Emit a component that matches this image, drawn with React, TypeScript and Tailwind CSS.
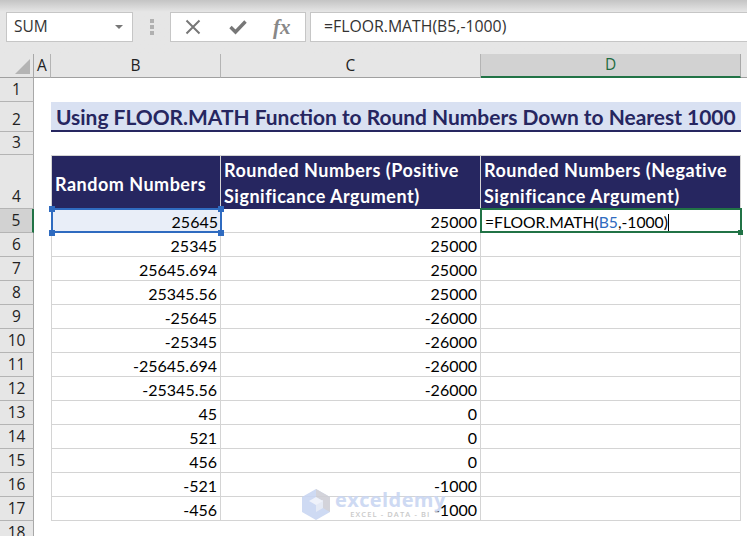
import React from 'react';

const rows: [number, string, string][] = [
  [6, '25345', '25000'],
  [7, '25645.694', '25000'],
  [8, '25345.56', '25000'],
  [9, '-25645', '-26000'],
  [10, '-25345', '-26000'],
  [11, '-25645.694', '-26000'],
  [12, '-25345.56', '-26000'],
  [13, '45', '0'],
  [14, '521', '0'],
  [15, '456', '0'],
  [16, '-521', '-1000'],
  [17, '-456', '-1000'],
];

const RowHead = ({ n, active }: { n?: number; active?: boolean }) => (
  <div
    className={`flex items-end justify-center border-b border-b-[#b4b4b4] text-[15.5px] leading-[23px] text-[#222] ${
      active ? 'bg-[#d2d2d2] border-r-2 border-r-[#217346] text-[#1e6b41]' : 'bg-[#e6e6e6] border-r border-r-[#a8a8a8]'
    }`}
  >
    {n}
  </div>
);

const ColHead = ({ label, active }: { label: string; active?: boolean }) => (
  <div
    className={`flex items-center justify-center text-[15.5px] ${
      active
        ? 'bg-[#d2d2d2] border-b-2 border-b-[#217346] border-r border-r-[#a8a8a8] text-[#1e6b41]'
        : 'bg-[#e6e6e6] border-b border-b-[#a0a0a0] border-r border-r-[#b4b4b4] text-[#222]'
    }`}
  >
    {label}
  </div>
);

const Handle = ({ className }: { className: string }) => (
  <span className={`absolute w-[6px] h-[6px] bg-[#2f6bc0] ${className}`} />
);

export default function App() {
  return (
    <div className="relative w-[747px] h-[536px] overflow-hidden bg-white font-['Open_Sans',sans-serif]">
      {/* formula bar */}
      <div className="h-[54px] bg-[#e6e6e6] bg-gradient-to-b from-[#c4c4c4] via-[#e6e6e6] via-[22%] to-[#e6e6e6] flex items-start pt-[12px] pl-[6px] gap-[4px]">
        <div className="w-[127px] h-[30px] bg-white border border-[#c6c6c6] flex items-center justify-between pl-[7px] pr-[9px] text-[15.5px] text-[#333]">
          <span>SUM</span>
          <span className="w-0 h-0 border-x-[4px] border-x-transparent border-t-[4px] border-t-[#777]" />
        </div>
        <div className="w-[29px] h-[30px] flex flex-col items-center justify-center gap-[2px]">
          <span className="w-[4px] h-[4px] bg-[#b0b0b0]" />
          <span className="w-[4px] h-[4px] bg-[#b0b0b0]" />
          <span className="w-[4px] h-[4px] bg-[#b0b0b0]" />
        </div>
        <div className="w-[136px] h-[30px] bg-white border border-[#c6c6c6] flex items-center pl-[14px]">
          <svg width="16" height="16" viewBox="0 0 16 16" className="shrink-0">
            <path d="M1.5 1.5 L14.5 14.5 M14.5 1.5 L1.5 14.5" stroke="#777" strokeWidth="2" fill="none" />
          </svg>
          <svg width="18" height="16" viewBox="0 0 18 16" className="shrink-0 ml-[28px]">
            <path d="M1.5 8 L6.5 13 L16.5 2.5" stroke="#777" strokeWidth="3.4" fill="none" />
          </svg>
          <span className="ml-[26px] font-['Liberation_Serif',serif] italic text-[21px] font-bold text-[#888] leading-none">fx</span>
        </div>
        <div className="flex-1 h-[30px] bg-white border-y border-l border-[#c6c6c6] flex items-center pl-[13px] text-[15.8px] text-[#333]">
          =FLOOR.MATH(B5,-1000)
        </div>
      </div>

      {/* sheet */}
      <div className="grid grid-cols-[34px_17px_170px_260px_260px_6px] grid-rows-[24px_24px_30px_23px_54px_24px_repeat(13,24px)]">
        {/* column headers */}
        <div className="bg-[#e6e6e6] border-r border-r-[#a8a8a8] border-b border-b-[#a0a0a0] flex items-end justify-end pr-[3px] pb-[3px]">
          <span className="w-0 h-0 border-l-[15px] border-l-transparent border-b-[15px] border-b-[#b4b4b4]" />
        </div>
        <ColHead label="A" />
        <ColHead label="B" />
        <ColHead label="C" />
        <ColHead label="D" active />
        <div className="bg-[#e6e6e6] border-b border-b-[#a0a0a0]" />

        {/* row 1 */}
        <RowHead n={1} />
        <div className="col-span-5" />

        {/* row 2 - title */}
        <RowHead n={2} />
        <div />
        <div className="col-span-3 bg-[#d9e1f2] border-b-2 border-b-[#262660] flex items-center pl-[5px] pt-[1px] font-['Lato',sans-serif] font-bold text-[20.95px] text-[#262660] whitespace-nowrap">
          Using FLOOR.MATH Function to Round Numbers Down to Nearest 1000
        </div>
        <div />

        {/* row 3 */}
        <RowHead n={3} />
        <div className="col-span-5" />

        {/* row 4 - table head */}
        <RowHead n={4} />
        <div />
        <div className="bg-[#262660] border-l border-r border-[#d4d4d4] border-t flex items-center pl-[3px] pt-[3px] font-['Lato',sans-serif] font-bold text-[18px] tracking-[0.5px] text-white whitespace-nowrap">
          Random Numbers
        </div>
        <div className="bg-[#262660] border-r border-t border-[#d4d4d4] flex items-center pl-[3px] pt-[1px] font-['Lato',sans-serif] font-bold text-[18px] tracking-[0.5px] leading-[26px] text-white whitespace-nowrap">
          <span>Rounded Numbers (Positive<br />Significance Argument)</span>
        </div>
        <div className="bg-[#262660] border-t border-r border-[#d4d4d4] flex items-center pl-[3px] pt-[1px] font-['Lato',sans-serif] font-bold text-[18px] tracking-[0.5px] leading-[26px] text-white whitespace-nowrap">
          <span>Rounded Numbers (Negative<br />Significance Argument)</span>
        </div>
        <div />

        {/* row 5 - active */}
        <RowHead n={5} active />
        <div />
        <div className="relative bg-[#e9eef8] border-l border-[#d4d4d4] flex items-center justify-end pr-[3px] pt-[2px] font-['Lato',sans-serif] text-[16px] text-black">
          25645
          <span className="absolute inset-x-[-1px] top-[-1px] bottom-0 border-2 border-[#2f6bc0] pointer-events-none" />
          <Handle className="left-[-3px] top-[-3px]" />
          <Handle className="right-[-3px] top-[-3px]" />
          <Handle className="left-[-3px] bottom-[-3px]" />
          <Handle className="right-[-3px] bottom-[-3px]" />
        </div>
        <div className="border-r border-b border-[#d4d4d4] flex items-center justify-end pr-[3px] pt-[3px] font-['Lato',sans-serif] text-[16px] text-black">
          25000
        </div>
        <div className="relative flex items-center pl-[4px] pt-[3px] font-['Lato',sans-serif] text-[15.7px] text-black whitespace-nowrap">
          =FLOOR.MATH(<span className="text-[#2f6bc0]">B5</span>,-1000)
          <span className="w-px h-[18px] bg-black" />
          <span className="absolute inset-x-[-1px] top-[-1px] bottom-0 border-2 border-[#217346] pointer-events-none" />
          <span className="absolute right-[-2px] bottom-[-2px] w-[5px] h-[5px] bg-[#217346]" />
        </div>
        <div />

        {rows.map(([n, b, c]) => (
          <React.Fragment key={n}>
            <RowHead n={n} />
            <div />
            <div className="border-l border-r border-b border-[#d4d4d4] flex items-center justify-end pr-[3px] pt-[3px] font-['Lato',sans-serif] text-[16px] text-black">
              {b}
            </div>
            <div className="border-r border-b border-[#d4d4d4] flex items-center justify-end pr-[3px] pt-[3px] font-['Lato',sans-serif] text-[16px] text-black">
              {c}
            </div>
            <div className="border-r border-b border-[#d4d4d4]" />
            <div />
          </React.Fragment>
        ))}
        <RowHead n={18} />
      </div>

      {/* watermark */}
      <div className="absolute left-[302px] top-[489px] flex items-start gap-[5px] pointer-events-none opacity-90">
        <svg width="28" height="31" viewBox="0 0 28 31">
          <path d="M14 0 L28 8 L28 23 L14 31 L0 23 L0 8 Z" fill="#c9d6f2" />
          <path d="M14 0 L28 8 L28 23 L21 19 L21 12 L14 8 Z" fill="#cfcfd6" />
          <path d="M14 14 L21 11 L21 19 L14 23 Z" fill="#e3e8f5" />
          <path d="M7 12 L14 8 L21 12 L14 16 Z" fill="#eef1fa" />
        </svg>
        <div className="flex flex-col items-center">
          <span className="font-['Open_Sans',sans-serif] font-bold text-[20px] leading-[21px] tracking-[0.4px] text-[#c9d6f2]">exceldemy</span>
          <span className="font-['Open_Sans',sans-serif] text-[7.5px] leading-[8px] tracking-[1.1px] text-[#c4c4c4] font-semibold">EXCEL - DATA - BI</span>
        </div>
      </div>
    </div>
  );
}
